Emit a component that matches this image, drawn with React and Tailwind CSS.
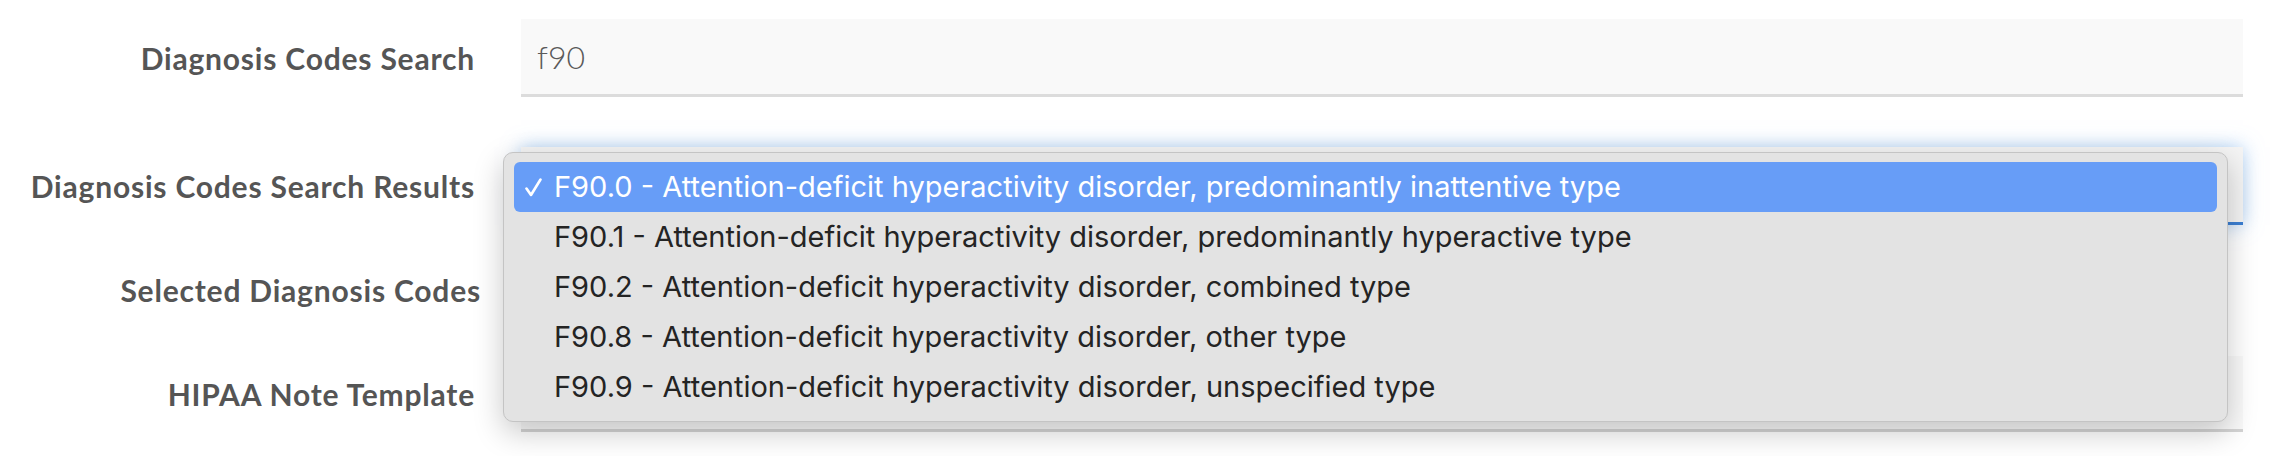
import React from 'react'

const options = [
  'F90.0 - Attention-deficit hyperactivity disorder, predominantly inattentive type',
  'F90.1 - Attention-deficit hyperactivity disorder, predominantly hyperactive type',
  'F90.2 - Attention-deficit hyperactivity disorder, combined type',
  'F90.8 - Attention-deficit hyperactivity disorder, other type',
  'F90.9 - Attention-deficit hyperactivity disorder, unspecified type',
]

const labelClass =
  "shrink-0 text-right text-[30px] font-bold tracking-[0.8px] text-[#555] font-['Lato',sans-serif] leading-none"

const FormRow = ({ label, className = '', wide = false, children }) => (
  <div className={`flex items-center ${className}`}>
    <div className={`${labelClass} ${wide ? 'w-[481px]' : 'w-[475px]'}`}>{label}</div>
    <div className={`flex-1 ${wide ? 'ml-[40px]' : 'ml-[46px]'}`}>{children}</div>
  </div>
)

const Check = () => (
  <svg width="17" height="19" viewBox="0 0 17 19" className="shrink-0">
    <path d="M1.5 10.5 L6 17 L15.5 1.5" fill="none" stroke="white" strokeWidth="2.6" strokeLinecap="round" strokeLinejoin="round" />
  </svg>
)

export default function App() {
  return (
    <div className="relative h-[456px] w-[2272px] overflow-hidden bg-white pr-[29px] pt-[19px]">
      <FormRow label="Diagnosis Codes Search">
        <div className="flex h-[78px] items-center border-b-[3px] border-[#dcdcdc] bg-[#f9f9f9] pl-[16px] font-['Lato',sans-serif] text-[32px] font-light text-[#5a5a5a]">
          f90
        </div>
      </FormRow>

      <FormRow label="Diagnosis Codes Search Results" className="mt-[50px]">
        <div className="h-[78px] border-b-[3px] border-[#3b7fd3] bg-[#f4f4f4] shadow-[0_0_18px_rgba(102,165,233,0.55)]" />
      </FormRow>

      <FormRow label="Selected Diagnosis Codes" className="mt-[26px]" wide>
        <div className="h-[78px] bg-white" />
      </FormRow>

      <FormRow label="HIPAA Note Template" className="mt-[27px]">
        <div className="h-[76px] border-b-[3px] border-[#d4d4d4] bg-[#f9f9f9]" />
      </FormRow>

      {/* native select popup */}
      <div className="absolute left-[503px] top-[152px] w-[1725px] rounded-[10px] border border-[#c4c4c4] bg-[#e3e3e3] px-[10px] py-[9px] font-['Inter',sans-serif] text-[29px] shadow-[0_10px_30px_rgba(0,0,0,0.22)]">
        {options.map((opt, i) => (
          <div
            key={opt}
            className={`flex h-[50px] items-center rounded-[6px] pl-[11px] ${
              i === 0 ? 'bg-[#679df7] text-white' : 'text-[#242424]'
            }`}
          >
            <div className="flex w-[29px] shrink-0">{i === 0 && <Check />}</div>
            <span className="whitespace-nowrap">{opt}</span>
          </div>
        ))}
      </div>
    </div>
  )
}
